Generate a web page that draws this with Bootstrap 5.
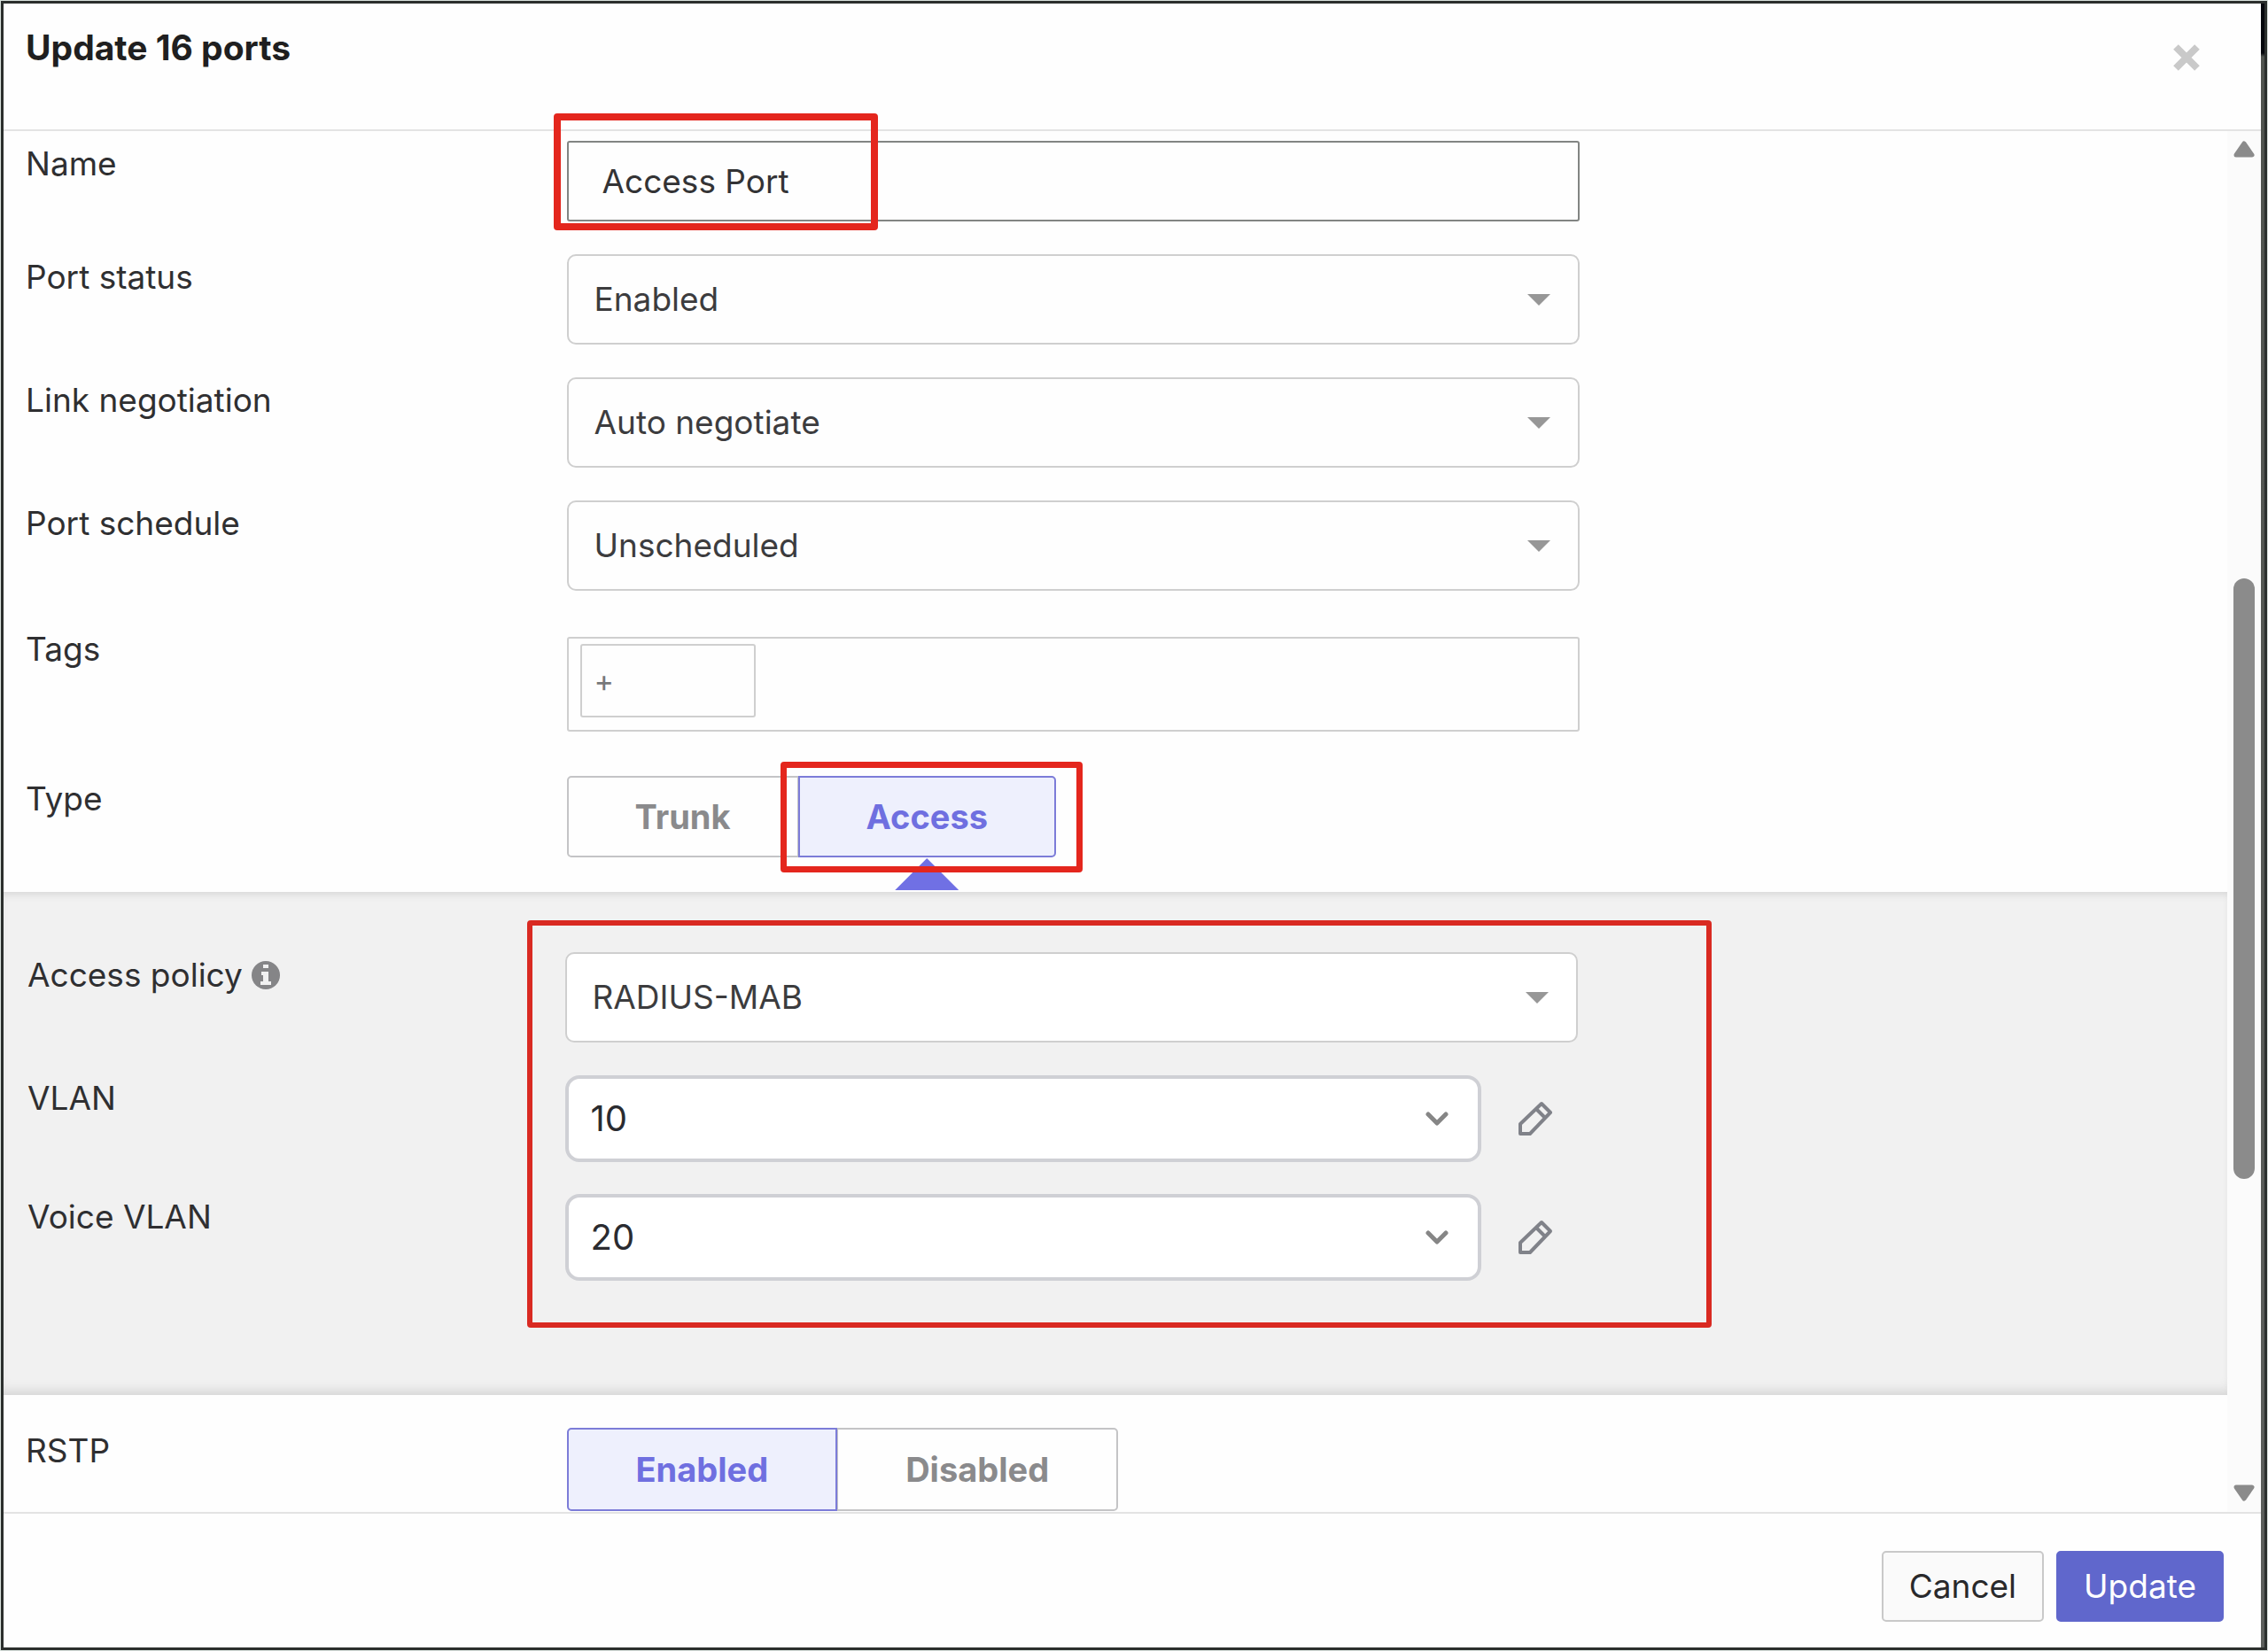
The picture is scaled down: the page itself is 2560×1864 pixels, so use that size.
<!DOCTYPE html>
<html lang="en">
<head>
<meta charset="utf-8">
<meta name="viewport" content="width=device-width, initial-scale=1">
<title>Update 16 ports</title>
<link rel="stylesheet" href="https://cdn.jsdelivr.net/npm/bootstrap@5.3.0/dist/css/bootstrap.min.css">
<style>
  body { font-family: Inter, "Liberation Sans", sans-serif; font-size: 37px; line-height: 52px; color: #2f2f31; background: #d9e2dd; padding: 1px; }
  .port-dialog { min-height: calc(100vh - 2px); border: 3px solid #2b2f2d; padding-right: 4px; background: linear-gradient(#05070c 0 56px, #50544f 60px 240px, #5c5f5c) right / 4px 100% no-repeat; }
  .dialog-head { height: 144px; padding: 24px 52px 0 25px; background: #fefefe; border-bottom: 2px solid #e3e3e3; }
  .dialog-head h1 { font-size: 39px; line-height: 52px; font-weight: 700; color: #1f1f20; }
  .close-btn { width: 64px; height: 64px; margin: 5px 0 0; color: #c9c9c9; }
  .dialog-main { background: #fefefe; }
  .fields-top { padding-top: 11px; }
  .field-row { margin-bottom: 37px; }
  .label-col { padding-left: 25px; }
  .control-col { padding-left: 8px; }
  .control-box { max-width: 1143px; }
  .port-name { height: 91px; border: 2px solid #828583; border-radius: 3px; padding: 0 38px; font-size: 37px; line-height: 52px; color: #333335; background: #fefefe; }
  .drop { height: 102px; border: 2px solid #cfcfcf; border-radius: 10px; padding: 0 72px 0 29px; font-size: 37px; line-height: 52px; color: #3c3c3e; background-color: #fefefe;
    background-image: url("data:image/svg+xml,%3Csvg xmlns='http://www.w3.org/2000/svg' viewBox='0 0 26 13'%3E%3Cpath d='M0 0h26L13 13z' fill='%23979797'/%3E%3C/svg%3E"); background-size: 26px 13px; background-position: right 31px center; }
  .vlan-drop { height: 98px; max-width: 1034px; border: 4px solid #cfd0d5; border-radius: 16px; padding: 0 72px 0 25px; font-size: 40px; color: #2a2b30;
    background-image: url("data:image/svg+xml,%3Csvg xmlns='http://www.w3.org/2000/svg' viewBox='0 0 26 16' fill='none' stroke='%23868686' stroke-width='5' stroke-linecap='round' stroke-linejoin='round'%3E%3Cpath d='M3 3l10 10L23 3'/%3E%3C/svg%3E"); background-size: 26px 16px; background-position: right 33px center; }
  .tags-row { padding-top: 3px; margin-bottom: 50px; }
  .tag-box { margin-top: 12px; height: 107px; border: 2px solid #cfcfcf; border-radius: 3px; padding: 6px 13px; }
  .tag-input { width: 198px; height: 83px; border: 2px solid #cfcfcf; border-radius: 3px; padding: 0 14px; font-size: 34px; background: transparent; }
  .tag-input::placeholder { color: #77787a; opacity: 1; }
  .type-row { margin-bottom: 39px; }
  .toggle-btn { --bs-btn-color: #8a8a8c; --bs-btn-border-color: #c4c4c6; --bs-btn-bg: #fefefe; --bs-btn-active-color: #6f6fe0; --bs-btn-active-bg: #eef0fd; --bs-btn-active-border-color: #7c7cd8;
    --bs-btn-font-size: 38px; --bs-btn-line-height: 52px; --bs-btn-font-weight: 700; --bs-btn-border-radius: 5px; --bs-btn-padding-x: 75px; --bs-btn-padding-y: 18px; border-width: 2px; }
  .rstp .toggle-btn { --bs-btn-padding-x: 76px; --bs-btn-padding-y: 19px; }
  .btn-check:checked + .toggle-btn { z-index: 1; }
  .pointer { position: absolute; z-index: 2; left: 50%; top: 91px; width: 72px; height: 36px; margin-left: -36px; background: #7070e4; clip-path: polygon(50% 0, 100% 100%, 0 100%); }
  .callout { position: absolute; z-index: 3; pointer-events: none; border: 8px solid #e4261d; border-radius: 4px; }
  .callout-name { left: -15px; top: -31px; width: 366px; height: 132px; }
  .callout-type { left: -22px; top: -18px; right: -32px; height: 125px; border-width: 7px; }
  .callout-access { left: calc(25% - 37px); top: 32px; width: 1337px; height: 460px; border-width: 6px; border-color: #d92a22; }
  .access-panel { position: relative; background: #f1f1f1; padding: 68px 0 129px; box-shadow: inset 0 8px 10px -6px #d2d2d2, inset 0 -12px 14px -8px #d2d2d2; }
  .access-panel .label-col { padding-left: 27px; }
  .access-panel .control-col { padding-left: 6px; }
  .access-panel .drop { background-color: #fff; }
  .vlan-row + .vlan-row { margin-top: 36px; }
  .info-icon { vertical-align: -3px; }
  .pencil-btn { color: #808289; margin-left: 40px; }
  .rstp { padding-top: 37px; }
  .scroll-track { width: 38px; background: #fbfbfb; padding: 11px 0 12px; color: #8b8b8b; }
  .thumb { width: 24px; border-radius: 12px; background: #8b8b8b; flex: 677 0 0; }
  .gap-above { flex: 475 0 0; }
  .gap-below { flex: 345 0 0; }
  .dialog-foot { gap: 14px; padding: 42px 42px 29px; background: #fefefe; border-top: 2px solid #e3e3e3; }
  .foot-btn { height: 80px; --bs-btn-font-size: 37px; --bs-btn-line-height: 52px; --bs-btn-padding-x: 29px; --bs-btn-padding-y: 0; --bs-btn-border-radius: 5px; border-width: 2px; }
  .cancel-btn { --bs-btn-color: #29292b; --bs-btn-bg: #fafafa; --bs-btn-border-color: #c9c9c9; }
  .update-btn { --bs-btn-color: #fff; --bs-btn-bg: #6067cc; --bs-btn-border-color: #6067cc; }
</style>
<script src="https://cdn.jsdelivr.net/npm/bootstrap@5.3.0/dist/js/bootstrap.bundle.min.js"></script>
</head>
<body>
<div class="port-dialog d-flex flex-column" role="dialog" aria-labelledby="dlg-title">
  <header class="dialog-head d-flex justify-content-between align-items-start">
    <h1 class="m-0" id="dlg-title">Update 16 ports</h1>
    <button type="button" class="close-btn btn border-0 p-0" aria-label="Close">
      <svg class="d-block mx-auto" width="30" height="30" viewBox="0 0 30 30" stroke="currentColor" stroke-width="8"><path d="M3 3l24 24M27 3L3 27"/></svg>
    </button>
  </header>

  <main class="dialog-main d-flex flex-grow-1">
    <form class="flex-grow-1" id="ports-form">
      <div class="fields-top">
        <div class="field-row row g-0">
          <label class="label-col col-3" for="port-name">Name</label>
          <div class="control-col col">
            <div class="control-box position-relative">
              <input class="port-name form-control" id="port-name" type="text" value="Access Port">
              <div class="callout callout-name"></div>
            </div>
          </div>
        </div>
        <div class="field-row row g-0">
          <label class="label-col col-3" for="port-status">Port status</label>
          <div class="control-col col"><div class="control-box">
            <select class="drop form-select" id="port-status"><option>Enabled</option></select>
          </div></div>
        </div>
        <div class="field-row row g-0">
          <label class="label-col col-3" for="link-neg">Link negotiation</label>
          <div class="control-col col"><div class="control-box">
            <select class="drop form-select" id="link-neg"><option>Auto negotiate</option></select>
          </div></div>
        </div>
        <div class="field-row row g-0">
          <label class="label-col col-3" for="port-sched">Port schedule</label>
          <div class="control-col col"><div class="control-box">
            <select class="drop form-select" id="port-sched"><option>Unscheduled</option></select>
          </div></div>
        </div>
        <div class="tags-row row g-0">
          <label class="label-col col-3" for="port-tags">Tags</label>
          <div class="control-col col"><div class="control-box tag-box d-flex">
            <input class="tag-input" id="port-tags" type="text" placeholder="+">
          </div></div>
        </div>
        <div class="type-row row g-0">
          <div class="label-col col-3" id="type-label">Type</div>
          <div class="control-col col">
            <div class="btn-group" role="group" aria-labelledby="type-label">
              <input class="btn-check" type="radio" name="type" id="type-trunk">
              <label class="toggle-btn btn" for="type-trunk">Trunk</label>
              <input class="btn-check" type="radio" name="type" id="type-access" checked>
              <label class="toggle-btn btn" for="type-access">Access<span class="pointer"></span><span class="callout callout-type"></span></label>
            </div>
          </div>
        </div>
      </div>

      <section class="access-panel">
        <div class="callout callout-access"></div>
        <div class="field-row row g-0">
          <label class="label-col col-3" for="policy">Access policy
            <svg class="info-icon" width="32" height="32" viewBox="0 0 32 32"><circle cx="16" cy="16" r="16" fill="#858587"/><path d="M13 4h6v4h-6zM11 12h8v11h3v4H10v-4h3v-7h-2z" fill="#f1f1f1"/></svg>
          </label>
          <div class="control-col col"><div class="control-box">
            <select class="drop form-select" id="policy"><option>RADIUS-MAB</option></select>
          </div></div>
        </div>
        <div class="vlan-row row g-0">
          <label class="label-col col-3" for="vlan">VLAN</label>
          <div class="control-col col"><div class="control-box d-flex align-items-center">
            <select class="drop vlan-drop form-select" id="vlan"><option>10</option></select>
            <button type="button" class="pencil-btn btn border-0 p-0 flex-shrink-0" aria-label="Edit VLAN">
              <svg class="d-block" width="42" height="42" viewBox="0 0 42 42" fill="none" stroke="currentColor" stroke-width="4" stroke-linejoin="round"><path d="M4 38V27L28 4L38 14L15 38zM22 10l10 10"/></svg>
            </button>
          </div></div>
        </div>
        <div class="vlan-row row g-0">
          <label class="label-col col-3" for="voice-vlan">Voice VLAN</label>
          <div class="control-col col"><div class="control-box d-flex align-items-center">
            <select class="drop vlan-drop form-select" id="voice-vlan"><option>20</option></select>
            <button type="button" class="pencil-btn btn border-0 p-0 flex-shrink-0" aria-label="Edit voice VLAN">
              <svg class="d-block" width="42" height="42" viewBox="0 0 42 42" fill="none" stroke="currentColor" stroke-width="4" stroke-linejoin="round"><path d="M4 38V27L28 4L38 14L15 38zM22 10l10 10"/></svg>
            </button>
          </div></div>
        </div>
      </section>

      <div class="rstp row g-0">
        <div class="label-col col-3" id="rstp-label">RSTP</div>
        <div class="control-col col">
          <div class="btn-group" role="group" aria-labelledby="rstp-label">
            <input class="btn-check" type="radio" name="rstp" id="rstp-on" checked>
            <label class="toggle-btn btn" for="rstp-on">Enabled</label>
            <input class="btn-check" type="radio" name="rstp" id="rstp-off">
            <label class="toggle-btn btn" for="rstp-off">Disabled</label>
          </div>
        </div>
      </div>
    </form>

    <div class="scroll-track d-flex flex-column align-items-center flex-shrink-0" aria-hidden="true">
      <svg width="24" height="19" viewBox="0 0 24 19" fill="currentColor" stroke="currentColor" stroke-width="5" stroke-linejoin="round"><path d="M12 3l9 13H3z"/></svg>
      <div class="gap-above"></div>
      <div class="thumb"></div>
      <div class="gap-below"></div>
      <svg width="24" height="19" viewBox="0 0 24 19" fill="currentColor" stroke="currentColor" stroke-width="5" stroke-linejoin="round"><path d="M12 16l9-13H3z"/></svg>
    </div>
  </main>

  <footer class="dialog-foot d-flex justify-content-end">
    <button type="button" class="foot-btn cancel-btn btn">Cancel</button>
    <button type="submit" form="ports-form" class="foot-btn update-btn btn">Update</button>
  </footer>
</div>
</body>
</html>
